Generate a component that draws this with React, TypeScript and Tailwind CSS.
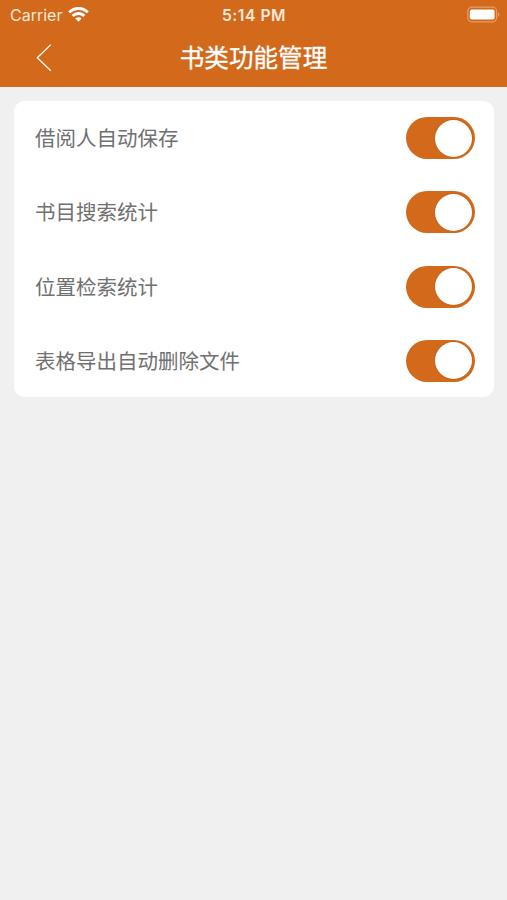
import { useState } from "react";

const SETTINGS = [
  { id: "autoSave", label: "借阅人自动保存" },
  { id: "bookSearch", label: "书目搜索统计" },
  { id: "positionSearch", label: "位置检索统计" },
  { id: "autoDelete", label: "表格导出自动删除文件" },
];

function StatusBar() {
  return (
    <div className="grid h-[30px] grid-cols-3 items-center pl-[10px] pr-[7px] font-['Inter','Liberation_Sans',sans-serif] text-[16px] leading-[30px] text-[#fbe9dc]">
      <div className="flex items-center gap-[6px]">
        <span className="w-[52px] whitespace-nowrap pb-[2px] leading-[28px]">Carrier</span>
        <svg className="-mt-px" width="21" height="16" viewBox="0 0 21 16" fill="none" stroke="#fff" strokeWidth="2.9">
          <path d="M1.2 5.3a13.2 13.2 0 0 1 18.6 0" />
          <path d="M4.6 8.9a8.4 8.4 0 0 1 11.8 0" />
          <path d="M10.5 14.7l-3.2-3.1a4.5 4.5 0 0 1 6.4 0z" fill="#fff" stroke="none" />
        </svg>
      </div>
      <span className="pr-[2px] pt-px text-center text-[15.7px] font-semibold tracking-[0.5px]">
        5:14 PM
      </span>
      <svg className="-mt-[3px] justify-self-end" width="33" height="17" viewBox="0 0 33 17" fill="none">
        <rect x="0.8" y="1.2" width="28.8" height="14.6" rx="4" stroke="#e59d69" strokeWidth="1.2" />
        <rect x="2.8" y="3.4" width="24.8" height="10.2" rx="2" fill="#fff" />
        <path d="M31 6.2c1.8.7 1.8 3.9 0 4.6z" fill="#e59d69" />
      </svg>
    </div>
  );
}

function Switch({ checked, onChange }: { checked: boolean; onChange: () => void }) {
  return (
    <button
      type="button"
      role="switch"
      aria-checked={checked}
      onClick={onChange}
      className={`flex h-[42px] w-[69.5px] items-center rounded-full px-[3px] ${
        checked ? "justify-end bg-[#d2691b]" : "justify-start bg-[#d9d9d9]"
      }`}
    >
      <span className="size-[37px] rounded-full bg-white shadow-[0_0_2px_rgba(0,0,0,0.15)]" />
    </button>
  );
}

export default function App() {
  const [enabled, setEnabled] = useState<Record<string, boolean>>({
    autoSave: true,
    bookSearch: true,
    positionSearch: true,
    autoDelete: true,
  });

  const handleToggle = (id: string) => {
    setEnabled((prev) => ({ ...prev, [id]: !prev[id] }));
  };

  return (
    <div className="min-h-screen bg-[#f0f0f0] font-['Noto_Sans_CJK_SC',sans-serif]">
      <header className="h-[87px] bg-[#d2691b]">
        <StatusBar />
        <div className="grid h-[55px] grid-cols-[60px_1fr_60px] items-center">
          <button type="button" aria-label="返回" className="pl-[36px]">
            <svg width="16" height="28" viewBox="0 0 16 28" fill="none" stroke="#fff" strokeWidth="1.3">
              <path d="M14.8 0.6L1.3 13.8l13.5 13" />
            </svg>
          </button>
          <h1 className="pb-[3px] text-center text-[24.6px] font-normal leading-[50px] text-white [-webkit-text-stroke:0.3px_#fff]">
            书类功能管理
          </h1>
        </div>
      </header>
      <main className="pl-[14px] pr-[13px] pt-[14px]">
        <ul className="rounded-[11px] bg-white">
          {SETTINGS.map(({ id, label }) => (
            <li key={id} className="flex h-[74.1px] items-center justify-between pl-[21px] pr-[19px] pt-[0.6px]">
              <span className="pb-[2px] text-[20.5px] leading-[30px] text-[#707070]">{label}</span>
              <Switch checked={enabled[id]} onChange={() => handleToggle(id)} />
            </li>
          ))}
        </ul>
      </main>
    </div>
  );
}
